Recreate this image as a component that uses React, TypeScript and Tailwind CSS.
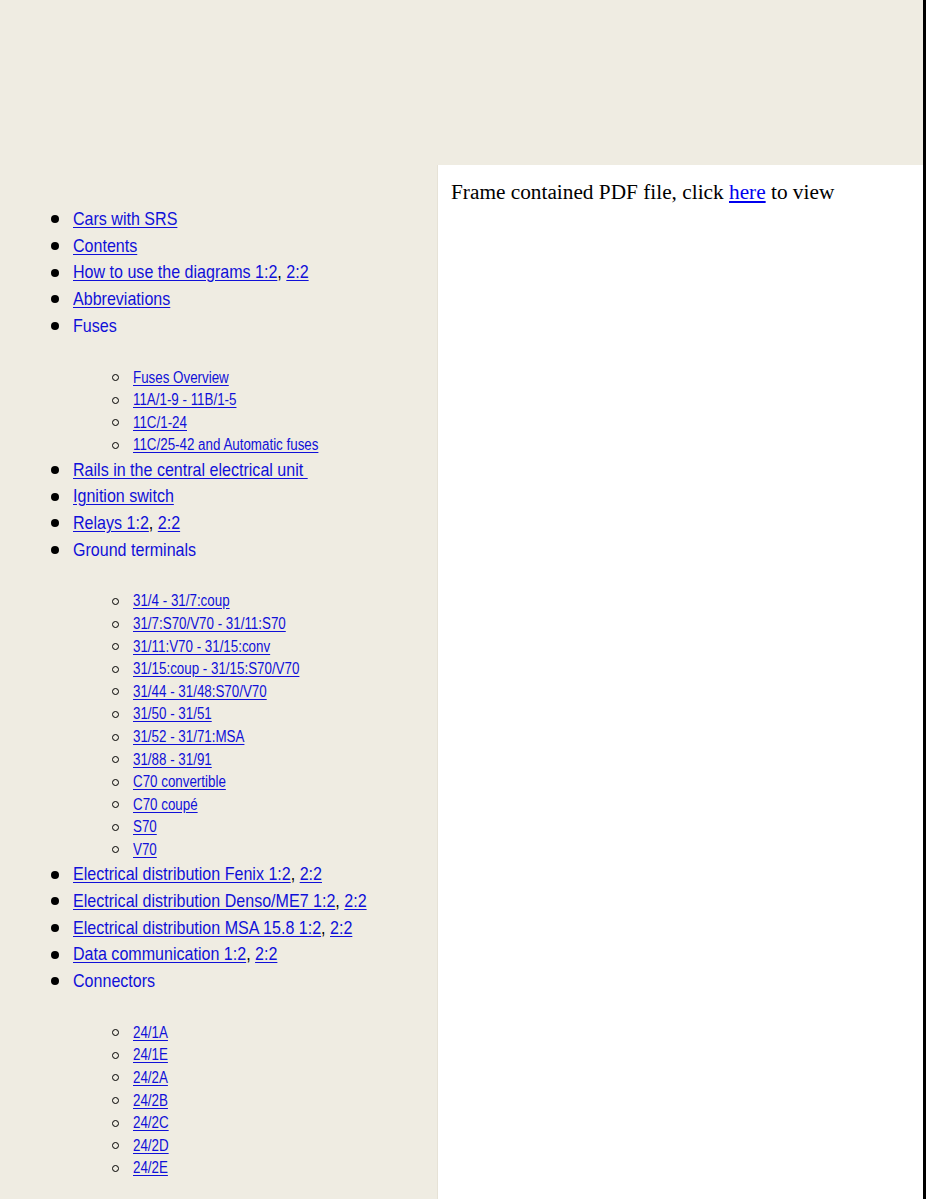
import React from 'react'

type Sub = string[]
type Item = { parts: string[]; plain?: boolean; sub?: Sub }

const items: Item[] = [
  { parts: ['Cars with SRS'] },
  { parts: ['Contents'] },
  { parts: ['How to use the diagrams 1:2', '2:2'] },
  { parts: ['Abbreviations'] },
  {
    parts: ['Fuses'],
    plain: true,
    sub: ['Fuses Overview', '11A/1-9 - 11B/1-5', '11C/1-24', '11C/25-42 and Automatic fuses'],
  },
  { parts: ['Rails in the central electrical unit\u00a0'] },
  { parts: ['Ignition switch'] },
  { parts: ['Relays 1:2', '2:2'] },
  {
    parts: ['Ground terminals'],
    plain: true,
    sub: [
      '31/4 - 31/7:coup',
      '31/7:S70/V70 - 31/11:S70',
      '31/11:V70 - 31/15:conv',
      '31/15:coup - 31/15:S70/V70',
      '31/44 - 31/48:S70/V70',
      '31/50 - 31/51',
      '31/52 - 31/71:MSA',
      '31/88 - 31/91',
      'C70 convertible',
      'C70 coupé',
      'S70',
      'V70',
    ],
  },
  { parts: ['Electrical distribution Fenix 1:2', '2:2'] },
  { parts: ['Electrical distribution Denso/ME7 1:2', '2:2'] },
  { parts: ['Electrical distribution MSA 15.8 1:2', '2:2'] },
  { parts: ['Data communication 1:2', '2:2'] },
  {
    parts: ['Connectors'],
    plain: true,
    sub: ['24/1A', '24/1E', '24/2A', '24/2B', '24/2C', '24/2D', '24/2E'],
  },
]

// the menu frame uses a narrow sans; no narrow face is installed, so squeeze Liberation Sans
const narrow = { fontFamily: '"Arial Narrow", "Liberation Sans", Arial, sans-serif' }

function SubList({ sub }: { sub: Sub }) {
  return (
    <ul className="pt-[27px]">
      {sub.map((s) => (
        <li key={s} className="flex h-[22.6px] items-center">
          <span className="ml-[112px] mr-[14px] h-[7px] w-[7px] rounded-full border border-black" />
          <a
            href="#"
            className="inline-block origin-left scale-x-[0.835] whitespace-nowrap text-[16px] text-[#1010d8] underline underline-offset-2"
          >
            {s}
          </a>
        </li>
      ))}
    </ul>
  )
}

export default function App() {
  return (
    <div className="flex h-[1199px] flex-col overflow-hidden border-r-[3px] border-black bg-[#efece2]">
      <div className="h-[165px] shrink-0" />
      <div className="flex flex-1">
        {/* Menu */}
        <div className="w-[437px] shrink-0 pt-[41px]" style={narrow}>
          <ul>
            {items.map((it) => (
              <li key={it.parts[0]}>
                <div className="flex h-[26.65px] items-center">
                  <span className="ml-[51px] mr-[14px] h-[8px] w-[8px] rounded-full bg-black" />
                  <span className="inline-block origin-left scale-x-[0.845] whitespace-nowrap text-[19px] text-black">
                    {it.plain ? (
                      <span className="text-[#1010d8]">{it.parts[0]}</span>
                    ) : (
                      it.parts.map((p, i) => (
                        <React.Fragment key={p}>
                          {i > 0 && ', '}
                          <a href="#" className="text-[#1010d8] underline underline-offset-2">
                            {p}
                          </a>
                        </React.Fragment>
                      ))
                    )}
                  </span>
                </div>
                {it.sub && <SubList sub={it.sub} />}
              </li>
            ))}
          </ul>
        </div>

        {/* Frame */}
        <div
          className="flex-1 border-l border-[#e6e2d6] bg-white pl-[13px] pt-[12px] text-[21.3px] text-black"
          style={{ fontFamily: '"Liberation Serif", "Times New Roman", serif' }}
        >
          Frame contained PDF file, click{' '}
          <a href="#" className="text-[#0000ee] underline">
            here
          </a>{' '}
          to view
        </div>
      </div>
    </div>
  )
}
